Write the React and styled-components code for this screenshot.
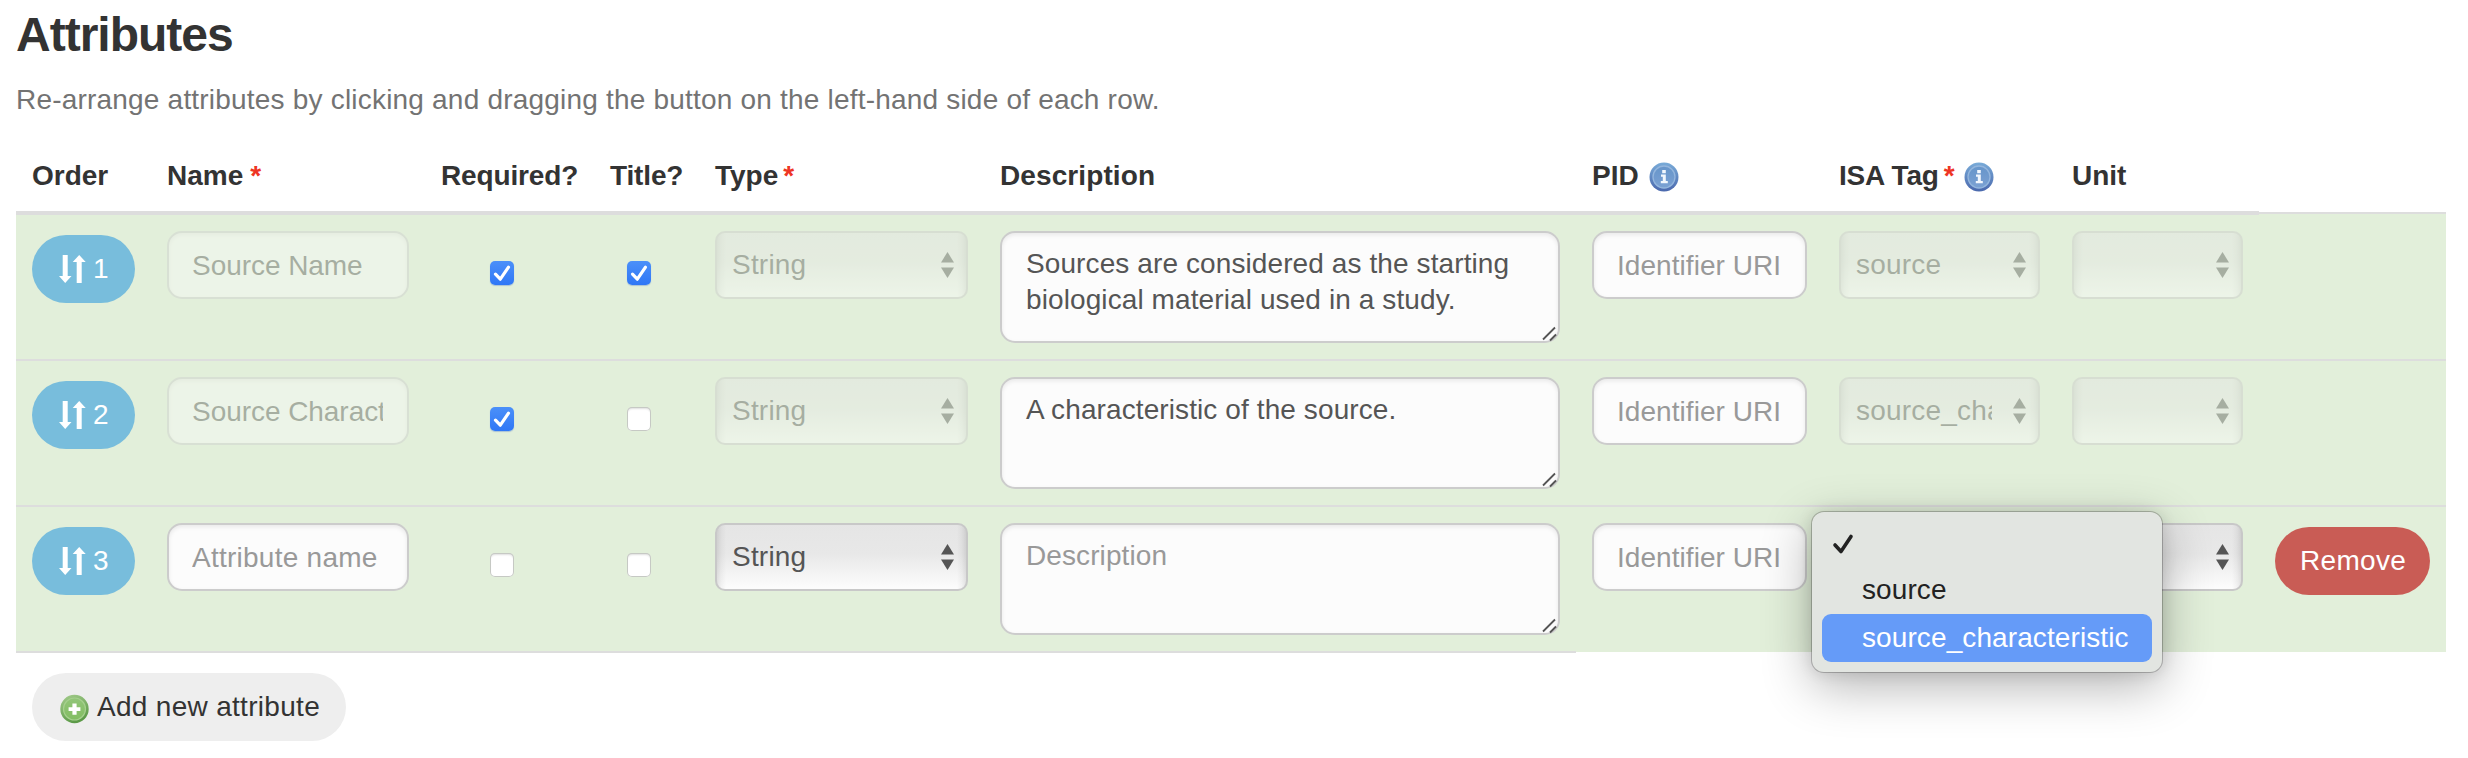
import React from "react";
import styled, { createGlobalStyle, css } from "styled-components";

const GlobalStyle = createGlobalStyle`
  * { box-sizing: border-box; }
  body { margin: 0; background: #fff; }
  body, input, textarea, button {
    font-family: "Liberation Sans", Arial, sans-serif;
    font-size: 28px;
    line-height: 40px;
    letter-spacing: 0.2px;
    color: #333;
  }
`;

const Page = styled.main`
  width: 2468px;
  height: 758px;
  padding: 8px 22px 0 16px;
  overflow: hidden;
`;

const Title = styled.h3`
  margin: 0;
  font-size: 48px;
  font-weight: 700;
  line-height: 54px;
  letter-spacing: -1px;
`;

const Help = styled.p`
  margin: 18px 0 20px;
  color: #737373;
`;

const columns = css`
  display: grid;
  grid-template-columns: 135px 274px 169px 105px 285px 592px 247px 233px 203px 187px;
  align-items: start;
`;

const HeaderRow = styled.div`
  ${columns}
  position: relative;
  z-index: 1;
  width: 2243px;
  height: 75px;
  border-bottom: 4px solid #ddd;
`;

const HeaderCell = styled.div`
  display: flex;
  padding: 16px 0 0 16px;
  font-weight: 700;
  letter-spacing: ${(p) => p.$tracking || "0"};
  white-space: nowrap;
`;

const Star = styled.span`
  margin-left: ${(p) => p.$gap || 7}px;
  color: #ee3524;
`;

const IconSlot = styled.span`
  display: flex;
  margin: 6px 0 0 ${(p) => p.$gap || 10}px;
`;

const Body = styled.div`
  margin-top: -3px;
`;

const Row = styled.div`
  ${columns}
  height: ${(p) => p.$height}px;
  padding-top: ${(p) => p.$top}px;
  border-top: 2px solid #ddd;
  background: #e2efda;
`;

const Cell = styled.div`
  display: flex;
  padding: ${(p) => p.$pad || "0 16px"};
`;

const EndRule = styled.div`
  width: 1560px;
  height: 2px;
  margin-top: -1px;
  background: #ddd;
`;

const Pill = styled.button`
  display: flex;
  align-items: center;
  flex: none;
  width: ${(p) => p.$width}px;
  height: 68px;
  padding: 0 0 0 ${(p) => p.$inset}px;
  border: 0;
  border-radius: 34px;
  background: ${(p) => p.$bg};
  color: ${(p) => p.$color || "#fff"};
  letter-spacing: 0.3px;
  white-space: nowrap;
`;

const OrderNumber = styled.span`
  margin-left: 7px;
`;

const faded = css`
  opacity: 0.42;
`;

const field = css`
  display: block;
  border: 2px solid #ccc;
  border-radius: 15px;
  background: #fcfcfc;
  box-shadow: inset 0 2px 4px rgba(0, 0, 0, 0.08);
  color: #555;
  outline: none;
  &::placeholder { color: #999; opacity: 1; }
`;

const TextInput = styled.input`
  ${field}
  width: 100%;
  height: 68px;
  padding: 2px ${(p) => p.$end || 24}px 0 ${(p) => p.$start || 24}px;
  letter-spacing: ${(p) => p.$tracking || "0.2px"};
  &:disabled { ${faded} color: #555; }
`;

const AreaWrap = styled.div`
  position: relative;
  width: 100%;
`;

const TextArea = styled.textarea`
  ${field}
  width: 100%;
  height: 112px;
  padding: 13px 24px;
  line-height: 36px;
  letter-spacing: 0.1px;
  resize: none;
  overflow: hidden;
`;

const Grip = styled.svg`
  position: absolute;
  right: 3px;
  bottom: 1px;
`;

const SelectBox = styled.div`
  display: flex;
  align-items: center;
  justify-content: space-between;
  width: 100%;
  height: 68px;
  padding: 0 12px 0 15px;
  border: 2px solid #c8c8c8;
  border-radius: 10px;
  background:
    linear-gradient(90deg, rgba(0,0,0,0.13), rgba(0,0,0,0.04) 6px, transparent 11px),
    linear-gradient(270deg, rgba(0,0,0,0.13), rgba(0,0,0,0.04) 6px, transparent 11px),
    linear-gradient(180deg, #e5e5e5, #e8e8e8 45%, #fcfcfc 95%);
  background-origin: border-box;
  color: #555;
  ${(p) => p.$disabled && faded}
`;

const SelectText = styled.span`
  flex: 1;
  margin-right: 21px;
  overflow: hidden;
  white-space: nowrap;
`;

const Check = styled.span`
  display: flex;
  width: 24px;
  height: 24px;
  margin-top: 30px;
  border-radius: 5px;
  background: ${(p) => (p.$on ? "linear-gradient(#4b90f9, #2f77f6)" : "#fff")};
  box-shadow: ${(p) =>
    p.$on
      ? "0 1px 1px rgba(40, 90, 200, 0.3)"
      : "inset 0 0 0 1px #c6c9c4, inset 0 2px 2px rgba(0,0,0,0.13)"};
`;

const Footer = styled.div`
  display: flex;
  padding: 20px 16px 0;
`;

const AddIconSlot = styled.span`
  display: flex;
  margin: 4px 8px 0 0;
`;

const IsaCell = styled(Cell)`
  position: relative;
`;

const Menu = styled.div`
  position: absolute;
  z-index: 2;
  top: -11px;
  left: -11px;
  width: 350px;
  height: 160px;
  padding: 6px 10px;
  border-radius: 12px;
  background: #e2e5e1;
  box-shadow: 0 0 0 1px rgba(0, 0, 0, 0.22), 0 14px 50px rgba(0, 0, 0, 0.3), 0 0 16px rgba(0, 0, 0, 0.12);
`;

const MenuItem = styled.div`
  display: flex;
  align-items: center;
  height: 48px;
  padding: ${(p) => (p.$checked ? "4px 0 0 10px" : "0 0 1px 40px")};
  border-radius: 9px;
  letter-spacing: 0.1px;
  color: ${(p) => (p.$active ? "#fff" : "#222")};
  background: ${(p) => (p.$active ? "#659bf8" : "transparent")};
`;

const SortIcon = () => (
  <svg width="27" height="28" viewBox="0 0 27 28" fill="#fff">
    <path d="M3.700 0h5v21h3.800L6.200 28 0 21h3.700z" />
    <path d="M17.700 28h5V7h4L20.200 0 13.700 7h4z" />
  </svg>
);

const UpDown = () => (
  <svg width="13" height="26" viewBox="0 0 13 26" fill="#555">
    <path d="M6.500 0L13 10.500H0z" />
    <path d="M0 15.500H13L6.500 26z" />
  </svg>
);

const Tick = () => (
  <svg width="24" height="24" viewBox="0 0 24 24" fill="none" stroke="#fff" strokeWidth="3.200" strokeLinecap="round" strokeLinejoin="round">
    <path d="M5.500 13.200L10.300 18.200L18.500 6.200" />
  </svg>
);

const MenuTick = () => (
  <svg width="22" height="22" viewBox="0 0 22 22" fill="none" stroke="#222" strokeWidth="3.600" strokeLinecap="round" strokeLinejoin="round">
    <path d="M3 12L9 18.500L19 3.500" />
  </svg>
);

const InfoIcon = () => (
  <svg width="30" height="30" viewBox="0 0 30 30">
    <defs>
      <linearGradient id="infoFill" x1="0" y1="0" x2="0" y2="1">
        <stop offset="0" stopColor="#79abd8" />
        <stop offset="1" stopColor="#4a68ad" />
      </linearGradient>
      <linearGradient id="infoCore" x1="0" y1="0" x2="0" y2="1">
        <stop offset="0" stopColor="#6695ca" />
        <stop offset="1" stopColor="#7ba1d3" />
      </linearGradient>
    </defs>
    <circle cx="15" cy="15" r="14.500" fill="url(#infoFill)" />
    <circle cx="15" cy="15" r="11" fill="url(#infoCore)" stroke="#94b6dd" strokeWidth="1.300" />
    <path d="M13.200 8h3.600v3.300h-3.600zM12 12.500h4.800v6.500h2v2.200h-7v-2.200h2v-4.300H12z" fill="#f2f7fd" />
  </svg>
);

const PlusIcon = () => (
  <svg width="29" height="30" viewBox="0 0 29 30">
    <defs>
      <linearGradient id="plusFill" x1="0" y1="0" x2="0.4" y2="1">
        <stop offset="0" stopColor="#a5cd8d" />
        <stop offset="1" stopColor="#5c9a48" />
      </linearGradient>
      <linearGradient id="plusCore" x1="0" y1="0" x2="0" y2="1">
        <stop offset="0" stopColor="#92c579" />
        <stop offset="1" stopColor="#82bd62" />
      </linearGradient>
    </defs>
    <circle cx="14.500" cy="15" r="14.200" fill="url(#plusFill)" />
    <circle cx="14.500" cy="15" r="11" fill="url(#plusCore)" stroke="#a5d08d" strokeWidth="1.200" />
    <path d="M12.400 9.500h4.200v3.700h3.800v3.800h-3.800v3.800h-4.200v-3.800h-3.800v-3.800h3.800z" fill="#fff" />
  </svg>
);

const Select = ({ value, disabled }) => (
  <SelectBox $disabled={disabled}>
    <SelectText>{value}</SelectText>
    <UpDown />
  </SelectBox>
);

const Checkbox = ({ on }) => <Check $on={on}>{on && <Tick />}</Check>;

const IsaMenu = () => (
  <Menu>
    <MenuItem $checked><MenuTick /></MenuItem>
    <MenuItem>source</MenuItem>
    <MenuItem $active>source_characteristic</MenuItem>
  </Menu>
);

const rows = [
  { order: 1, name: "Source Name", required: true, title: true, description: "Sources are considered as the starting biological material used in a study.", tag: "source", locked: true, height: 147, top: 17 },
  { order: 2, name: "Source Characteristic", required: true, title: false, description: "A characteristic of the source.", tag: "source_characteristic", locked: true, height: 146, top: 16 },
  { order: 3, name: "", required: false, title: false, description: "", tag: "", locked: false, height: 147, top: 16 },
];

const AttributeRow = ({ row }) => (
  <Row $height={row.height} $top={row.top}>
    <Cell $pad="4px 16px 0">
      <Pill $bg="#78bddc" $width={103} $inset={27}>
        <SortIcon />
        <OrderNumber>{row.order}</OrderNumber>
      </Pill>
    </Cell>
    <Cell>
      <TextInput
        disabled={row.locked}
        defaultValue={row.name}
        placeholder="Attribute name"
        $start={23}
        $tracking={row.locked ? "-0.05px" : "0.25px"}
      />
    </Cell>
    <Cell $pad="0 0 0 65px"><Checkbox on={row.required} /></Cell>
    <Cell $pad="0 0 0 33px"><Checkbox on={row.title} /></Cell>
    <Cell><Select value="String" disabled={row.locked} /></Cell>
    <Cell>
      <AreaWrap>
        <TextArea defaultValue={row.description} placeholder="Description" spellCheck={false} />
        <Grip width="15" height="16" viewBox="0 0 15 16" stroke="#555" strokeWidth="1.800">
          <path d="M1 13.500L13 1.500M8 14.500L14 8.500" />
        </Grip>
      </AreaWrap>
    </Cell>
    <Cell><TextInput placeholder="Identifier URI" $start={23} $end={16} $tracking="0.05px" /></Cell>
    <IsaCell>
      <Select value={row.tag} disabled={row.locked} />
      {!row.locked && <IsaMenu />}
    </IsaCell>
    <Cell><Select value="" disabled={row.locked} /></Cell>
    <Cell $pad="4px 16px 0">
      {!row.locked && <Pill $bg="#c95c55" $width={155} $inset={25}>Remove</Pill>}
    </Cell>
  </Row>
);

export default function App() {
  return (
    <Page>
      <GlobalStyle />
      <Title>Attributes</Title>
      <Help>Re-arrange attributes by clicking and dragging the button on the left-hand side of each row.</Help>
      <HeaderRow>
        <HeaderCell>Order</HeaderCell>
        <HeaderCell>Name<Star>*</Star></HeaderCell>
        <HeaderCell $tracking="-0.15px">Required?</HeaderCell>
        <HeaderCell $tracking="-0.15px">Title?</HeaderCell>
        <HeaderCell>Type<Star $gap={5}>*</Star></HeaderCell>
        <HeaderCell $tracking="0.1px">Description</HeaderCell>
        <HeaderCell>PID<IconSlot><InfoIcon /></IconSlot></HeaderCell>
        <HeaderCell $tracking="-0.2px">ISA Tag<Star $gap={5}>*</Star><IconSlot><InfoIcon /></IconSlot></HeaderCell>
        <HeaderCell>Unit</HeaderCell>
      </HeaderRow>
      <Body>
        {rows.map((row) => <AttributeRow key={row.order} row={row} />)}
        <EndRule />
      </Body>
      <Footer>
        <Pill $bg="#eee" $color="#333" $width={314} $inset={28}>
          <AddIconSlot><PlusIcon /></AddIconSlot>
          Add new attribute
        </Pill>
      </Footer>
    </Page>
  );
}
